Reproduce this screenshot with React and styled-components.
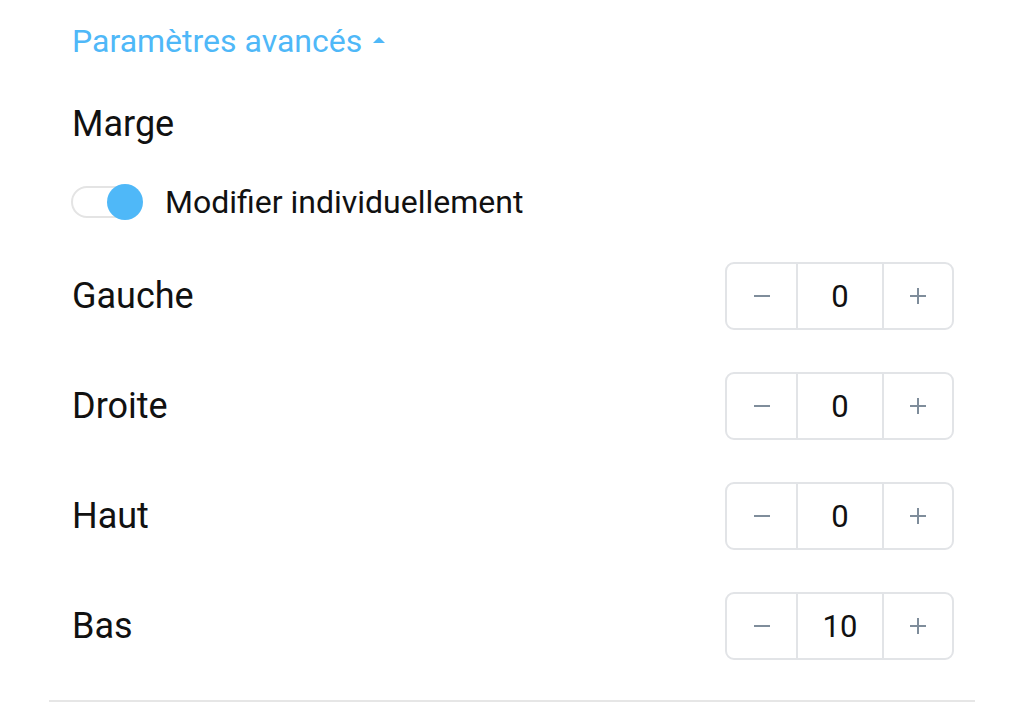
import React, { useState } from "react";
import styled, { createGlobalStyle } from "styled-components";

const Global = createGlobalStyle`
  body {
    margin: 0;
    background: #fff;
    font-family: Roboto, "Noto Sans", sans-serif;
    color: #111;
  }
`;

const Panel = styled.div`
  width: 926px;
  margin-left: 49px;
  border-bottom: 2px solid #e6e6e6;
  padding: 20px 21px 40px 23px;
  box-sizing: border-box;
`;

const Toggler = styled.div`
  display: flex;
  align-items: center;
  gap: 11px;
  height: 42px;
  font-size: 32px;
  color: #4fb8f8;
`;

const Caret = styled.span`
  width: 0;
  height: 0;
  border-left: 6px solid transparent;
  border-right: 6px solid transparent;
  border-bottom: 6px solid #4fb8f8;
  margin-top: -2px;
`;

const Section = styled.div`
  margin-top: 42px;
  height: 40px;
  line-height: 40px;
  font-size: 36px;
`;

const SwitchRow = styled.label`
  display: flex;
  align-items: center;
  margin-top: 40px;
  height: 36px;
  gap: 24px;
  font-size: 32px;
`;

const Track = styled.span`
  position: relative;
  width: 70px;
  height: 32px;
  border-radius: 16px;
  border: 2px solid #e4e4e4;
  background: #fff;
  box-sizing: border-box;
  margin-left: -1px;
  flex-shrink: 0;
`;

const Thumb = styled.span`
  position: absolute;
  top: -4px;
  left: ${(p) => (p.on ? "34px" : "-2px")};
  width: 36px;
  height: 36px;
  border-radius: 50%;
  background: #4fb8f8;
`;

const Rows = styled.div`
  display: flex;
  flex-direction: column;
  gap: 42px;
  margin-top: 42px;
`;

const Row = styled.div`
  display: flex;
  align-items: center;
  justify-content: space-between;
  height: 68px;
`;

const Label = styled.span`
  font-size: 36px;
`;

const Stepper = styled.div`
  display: grid;
  grid-template-columns: 69px 86px 1fr;
  height: 68px;
  width: 229px;
  border: 2px solid #e2e4e7;
  border-radius: 9px;
  box-sizing: border-box;
`;

const StepBtn = styled.button`
  display: flex;
  align-items: center;
  justify-content: center;
  border: none;
  background: none;
  padding: 0;
  color: #7f8d9b;
  border-left: ${(p) => (p.plus ? "2px solid #e2e4e7" : "none")};
`;

const Value = styled.div`
  display: flex;
  align-items: center;
  justify-content: center;
  border-left: 2px solid #e2e4e7;
  font-size: 31px;
  color: #111;
`;

const Sign = ({ plus }) => (
  <svg width="16" height="16" viewBox="0 0 16 16" fill="none" stroke="currentColor" strokeWidth="2">
    <line x1="0" y1="8" x2="16" y2="8" />
    {plus && <line x1="8" y1="0" x2="8" y2="16" />}
  </svg>
);

const margins = [
  { label: "Gauche", value: 0 },
  { label: "Droite", value: 0 },
  { label: "Haut", value: 0 },
  { label: "Bas", value: 10 },
];

export default function App() {
  const [on, setOn] = useState(true);
  return (
    <>
      <Global />
      <Panel>
        <Toggler>
          Paramètres avancés <Caret />
        </Toggler>
        <Section>Marge</Section>
        <SwitchRow onClick={() => setOn(!on)}>
          <Track>
            <Thumb on={on ? 1 : 0} />
          </Track>
          Modifier individuellement
        </SwitchRow>
        <Rows>
          {margins.map((m) => (
            <Row key={m.label}>
              <Label>{m.label}</Label>
              <Stepper>
                <StepBtn aria-label="moins">
                  <Sign />
                </StepBtn>
                <Value>{m.value}</Value>
                <StepBtn plus aria-label="plus">
                  <Sign plus />
                </StepBtn>
              </Stepper>
            </Row>
          ))}
        </Rows>
      </Panel>
    </>
  );
}
